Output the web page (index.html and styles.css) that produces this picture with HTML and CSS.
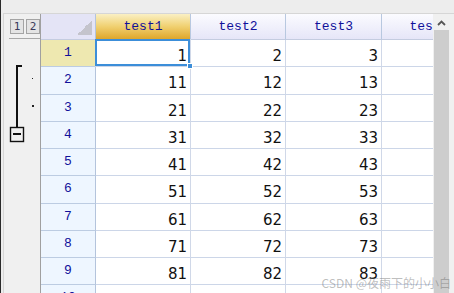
FILE: index.html
```html
<!DOCTYPE html>
<html lang="en">
<head>
  <meta charset="UTF-8" />
  <title>Grid</title>
  <link rel="stylesheet" href="styles.css">
</head>
<body>
  <div class="app">
    <div class="edge"></div>
    <div class="frame">
      <div class="band"></div>
      <div class="sheet">
        <div class="gutter">
          <div class="levels">
            <span class="lvl">1</span>
            <span class="lvl">2</span>
          </div>
          <svg class="outline" width="37" height="253" viewBox="0 0 37 253">
            <rect x="12" y="26" width="2" height="62" fill="#111" />
            <rect x="12" y="26" width="6" height="2" fill="#111" />
            <rect x="28" y="39" width="1" height="1" fill="#222" />
            <rect x="28" y="66" width="2" height="2" fill="#222" />
            <rect x="6.5" y="88.5" width="13" height="14" fill="#f0f0f0" stroke="#111" stroke-width="1.4" />
            <rect x="9" y="94" width="8" height="2" fill="#111" />
          </svg>
        </div>
        <div class="grid">
          <div class="corner"><span class="tri"></span></div>
          <div class="colhead sel">test1</div>
          <div class="colhead">test2</div>
          <div class="colhead">test3</div>
          <div class="colhead">test4</div>

          <div class="rowhead sel">1</div>
          <div class="cell active">1</div><div class="cell">2</div><div class="cell">3</div><div class="cell"></div>
          <div class="rowhead">2</div>
          <div class="cell">11</div><div class="cell">12</div><div class="cell">13</div><div class="cell"></div>
          <div class="rowhead">3</div>
          <div class="cell">21</div><div class="cell">22</div><div class="cell">23</div><div class="cell"></div>
          <div class="rowhead">4</div>
          <div class="cell">31</div><div class="cell">32</div><div class="cell">33</div><div class="cell"></div>
          <div class="rowhead">5</div>
          <div class="cell">41</div><div class="cell">42</div><div class="cell">43</div><div class="cell"></div>
          <div class="rowhead">6</div>
          <div class="cell">51</div><div class="cell">52</div><div class="cell">53</div><div class="cell"></div>
          <div class="rowhead">7</div>
          <div class="cell">61</div><div class="cell">62</div><div class="cell">63</div><div class="cell"></div>
          <div class="rowhead">8</div>
          <div class="cell">71</div><div class="cell">72</div><div class="cell">73</div><div class="cell"></div>
          <div class="rowhead">9</div>
          <div class="cell">81</div><div class="cell">82</div><div class="cell">83</div><div class="cell"></div>
          <div class="rowhead">10</div>
          <div class="cell">91</div><div class="cell">92</div><div class="cell">93</div><div class="cell"></div>
        </div>
        <div class="scroll">
          <div class="arrow">
            <svg width="15" height="16" viewBox="0 0 15 16">
              <path d="M4 11 L7.5 7.5 L11 11" fill="none" stroke="#555" stroke-width="1.8" />
            </svg>
          </div>
          <div class="thumb"></div>
        </div>
      </div>
    </div>
    <div class="mark">CSDN @夜雨下的小小白</div>
  </div>
</body>
</html>
```

FILE: styles.css
```css
body {
  margin: 0;
  font-family: "DejaVu Sans", sans-serif;
}
.app {
  position: relative;
  width: 454px;
  height: 293px;
  display: flex;
  overflow: hidden;
  background: #f0f0f0;
}
.edge {
  width: 1px;
  background: #2a2a2a;
}
.frame {
  flex: 1;
  display: flex;
  flex-direction: column;
  background: #ededed;
}
.band {
  height: 13px;
  flex: none;
}
.sheet {
  flex: 1;
  display: flex;
  margin-left: 2px;
  border-top: 1px solid #d6d6d6;
  border-left: 1px solid #d6d6d6;
  background: #f0f0f0;
  min-height: 0;
}
.gutter {
  width: 37px;
  flex: none;
  display: flex;
  flex-direction: column;
}
.levels {
  height: 25px;
  margin-left: 5px;
  padding: 5px 0 0 1px;
  box-sizing: border-box;
  border-bottom: 1px solid #a8a8a8;
  display: flex;
  gap: 2px;
  align-items: flex-start;
}
.lvl {
  width: 14px;
  height: 15px;
  box-sizing: border-box;
  border: 1px solid #a4a4a4;
  background: #e4e4e4;
  font: 11px/13px "DejaVu Sans Mono", monospace;
  color: #3a3a5a;
  text-align: center;
}
.outline {
  display: block;
}
.grid {
  width: 392px;
  flex: none;
  overflow: hidden;
  display: grid;
  grid-template-columns: 55px 95px 95px 96px 95px;
  grid-template-rows: 26px;
  grid-auto-rows: 27.25px;
  background: #fff;
  border-left: 1px solid #a0a0a0;
  margin-left: -1px;
}
.corner {
  background: #e4e4f6;
  border-right: 1px solid #b4c4dc;
  border-bottom: 1px solid #c4cce0;
  display: flex;
  justify-content: flex-end;
  align-items: flex-end;
  padding: 0 3px 4px 0;
}
.tri {
  width: 15px;
  height: 15px;
  background: linear-gradient(to bottom right, transparent 50%, #c4c4cc 50%);
}
.colhead {
  background: linear-gradient(#fbfbff, #e6e6f8);
  border-right: 1px solid #b8c8e0;
  border-bottom: 1px solid #c4cce0;
  font: 13px/25px "Liberation Mono", monospace;
  color: #10109a;
  text-align: center;
  white-space: nowrap;
}
.colhead.sel {
  background: linear-gradient(#faf0c4, #f0d070 50%, #dea62c);
}
.rowhead {
  background: #eef6ff;
  border-right: 1px solid #b4c4dc;
  border-bottom: 1px solid #bccce2;
  font: 13px/25px "Liberation Mono", monospace;
  color: #10109a;
  text-align: center;
}
.rowhead.sel {
  background: #eee8b0;
}
.cell {
  border-right: 1px solid #d0d8e8;
  border-bottom: 1px solid #ccd6e8;
  padding: 7px 3px 0 0;
  font-size: 15px;
  line-height: 18px;
  color: #111;
  text-align: right;
}
.cell.active {
  position: relative;
  box-shadow: inset 0 0 0 2px #3c8ed9;
  margin: -1px 0 0 -1px;
  padding: 8px 3px 0 0;
}
.cell.active::after {
  content: "";
  position: absolute;
  right: -3px;
  bottom: -3px;
  width: 4px;
  height: 4px;
  background: #3c8ed9;
  border: 1px solid #fff;
}
.scroll {
  flex: 1;
  display: flex;
  flex-direction: column;
  padding-left: 1px;
  background: #f0f0f0;
}
.arrow {
  height: 16px;
  flex: none;
}
.arrow svg {
  display: block;
}
.thumb {
  width: 15px;
  flex: 1;
  background: #cdcdcd;
}
.mark {
  position: absolute;
  right: 3px;
  bottom: 3px;
  font: 12px/14px "Noto Sans CJK SC", sans-serif;
  color: rgba(110, 110, 110, 0.45);
}
```
